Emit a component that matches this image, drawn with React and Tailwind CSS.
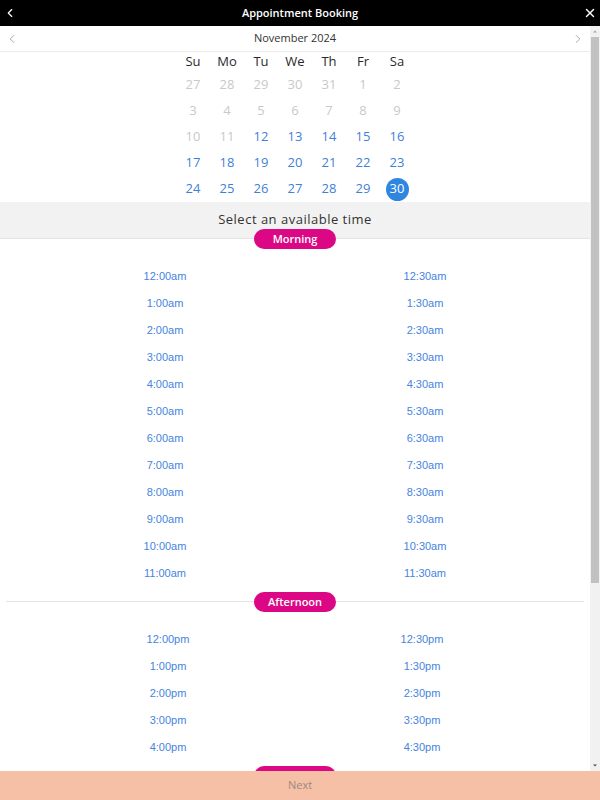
import { ChevronLeft, ChevronRight, X } from "lucide-react";

// calendar grid for November 2024 (leading days from October)
const weekdays = ["Su", "Mo", "Tu", "We", "Th", "Fr", "Sa"];
const weeks = [
  [27, 28, 29, 30, 31, 1, 2],
  [3, 4, 5, 6, 7, 8, 9],
  [10, 11, 12, 13, 14, 15, 16],
  [17, 18, 19, 20, 21, 22, 23],
  [24, 25, 26, 27, 28, 29, 30],
];

const sections = [
  {
    name: "Morning",
    slots: ["12:00am", "12:30am", "1:00am", "1:30am", "2:00am", "2:30am", "3:00am", "3:30am", "4:00am", "4:30am", "5:00am", "5:30am", "6:00am", "6:30am", "7:00am", "7:30am", "8:00am", "8:30am", "9:00am", "9:30am", "10:00am", "10:30am", "11:00am", "11:30am"],
  },
  {
    name: "Afternoon",
    slots: ["12:00pm", "12:30pm", "1:00pm", "1:30pm", "2:00pm", "2:30pm", "3:00pm", "3:30pm", "4:00pm", "4:30pm"],
  },
  {
    name: "Evening",
    slots: ["5:00pm", "5:30pm", "6:00pm", "6:30pm", "7:00pm", "7:30pm", "8:00pm", "8:30pm", "9:00pm", "9:30pm", "10:00pm", "10:30pm", "11:00pm", "11:30pm"],
  },
];

function Pill({ children }) {
  return (
    <div className="flex justify-center -mt-[10px]">
      <span className="h-[20px] w-[82px] rounded-full bg-[#dc0785] text-white text-[11px] font-semibold flex items-center justify-center">
        {children}
      </span>
    </div>
  );
}

function Slots({ slots }) {
  return (
    <div className="grid grid-cols-2 px-[35px] py-[14px] font-['Liberation_Sans',Arial,sans-serif] text-[11px] text-[#4684e0]">
      {slots.map((s) => (
        <div key={s} className="h-[27px] flex items-center justify-center">{s}</div>
      ))}
    </div>
  );
}

// classic scrollbar look next to the list
function ScrollTrack() {
  return (
    <div className="w-[10px] shrink-0 bg-[#f1f1f1] flex flex-col items-center">
      <svg width="10" height="11" viewBox="0 0 10 11">
        <path d="M3 6.5 L5 4.5 L7 6.5 Z" fill="#a3a3a3" />
      </svg>
      <div className="w-[8px] h-[546px] bg-[#c1c1c1]" />
      <div className="flex-1" />
      <svg width="10" height="11" viewBox="0 0 10 11">
        <path d="M3 4.5 L7 4.5 L5 6.5 Z" fill="#505050" />
      </svg>
    </div>
  );
}

export default function App() {
  return (
    <div className="h-[800px] w-[600px] flex flex-col bg-white font-['Open_Sans','Noto_Sans',sans-serif] overflow-hidden">
      {/* top bar */}
      <header className="h-[26px] shrink-0 bg-black text-white flex items-center justify-between px-[3px]">
        <ChevronLeft size={14} strokeWidth={2} />
        <span className="text-[11px] font-semibold">Appointment Booking</span>
        <X size={14} strokeWidth={2.5} />
      </header>

      <div className="flex-1 flex min-h-0">
        <div className="flex-1 overflow-hidden">
          {/* month nav */}
          <div className="h-[26px] border-b border-[#ececec] flex items-center justify-between px-[5px] text-[#8a8a8a]">
            <ChevronLeft size={14} strokeWidth={1.25} />
            <span className="text-[11px] text-[#333]">November 2024</span>
            <ChevronRight size={14} strokeWidth={1.25} />
          </div>

          {/* calendar */}
          <div className="flex flex-col items-center">
            <div className="grid grid-cols-7 w-[238px] h-[20px] items-center text-[13px] text-[#2a2a2a]">
              {weekdays.map((d) => (
                <div key={d} className="text-center">{d}</div>
              ))}
            </div>
            {weeks.map((w, i) => (
              <div key={i} className="grid grid-cols-7 w-[238px] h-[26px] items-center text-[13px]">
                {w.map((d, j) => {
                  const muted = i === 0 || i === 1 || (i === 2 && j < 2);
                  if (d === 30 && i === 4) {
                    return (
                      <div key={j} className="flex justify-center">
                        <span className="w-[23px] h-[23px] rounded-full bg-[#2f86e0] text-white flex items-center justify-center">30</span>
                      </div>
                    );
                  }
                  return (
                    <div key={j} className={muted ? "text-center text-[#c9c9c9]" : "text-center text-[#3f7fd8]"}>{d}</div>
                  );
                })}
              </div>
            ))}
          </div>

          {/* time picker */}
          <div className="h-[37px] bg-[#f2f2f2] border-b border-[#e4e4e4] flex items-center justify-center text-[13px] tracking-[0.5px] text-[#333]">
            Select an available time
          </div>
          {sections.map((sec, i) => (
            <div key={sec.name} className={i === 0 ? "" : "border-t border-[#e4e4e4] mx-[6px]"}>
              <Pill>{sec.name}</Pill>
              <Slots slots={sec.slots} />
            </div>
          ))}
        </div>
        <ScrollTrack />
      </div>

      {/* footer */}
      <div className="h-[29px] shrink-0 bg-[#f5c0a6] flex items-center justify-center text-[11px] text-[#9a8a82]">
        Next
      </div>
    </div>
  );
}
